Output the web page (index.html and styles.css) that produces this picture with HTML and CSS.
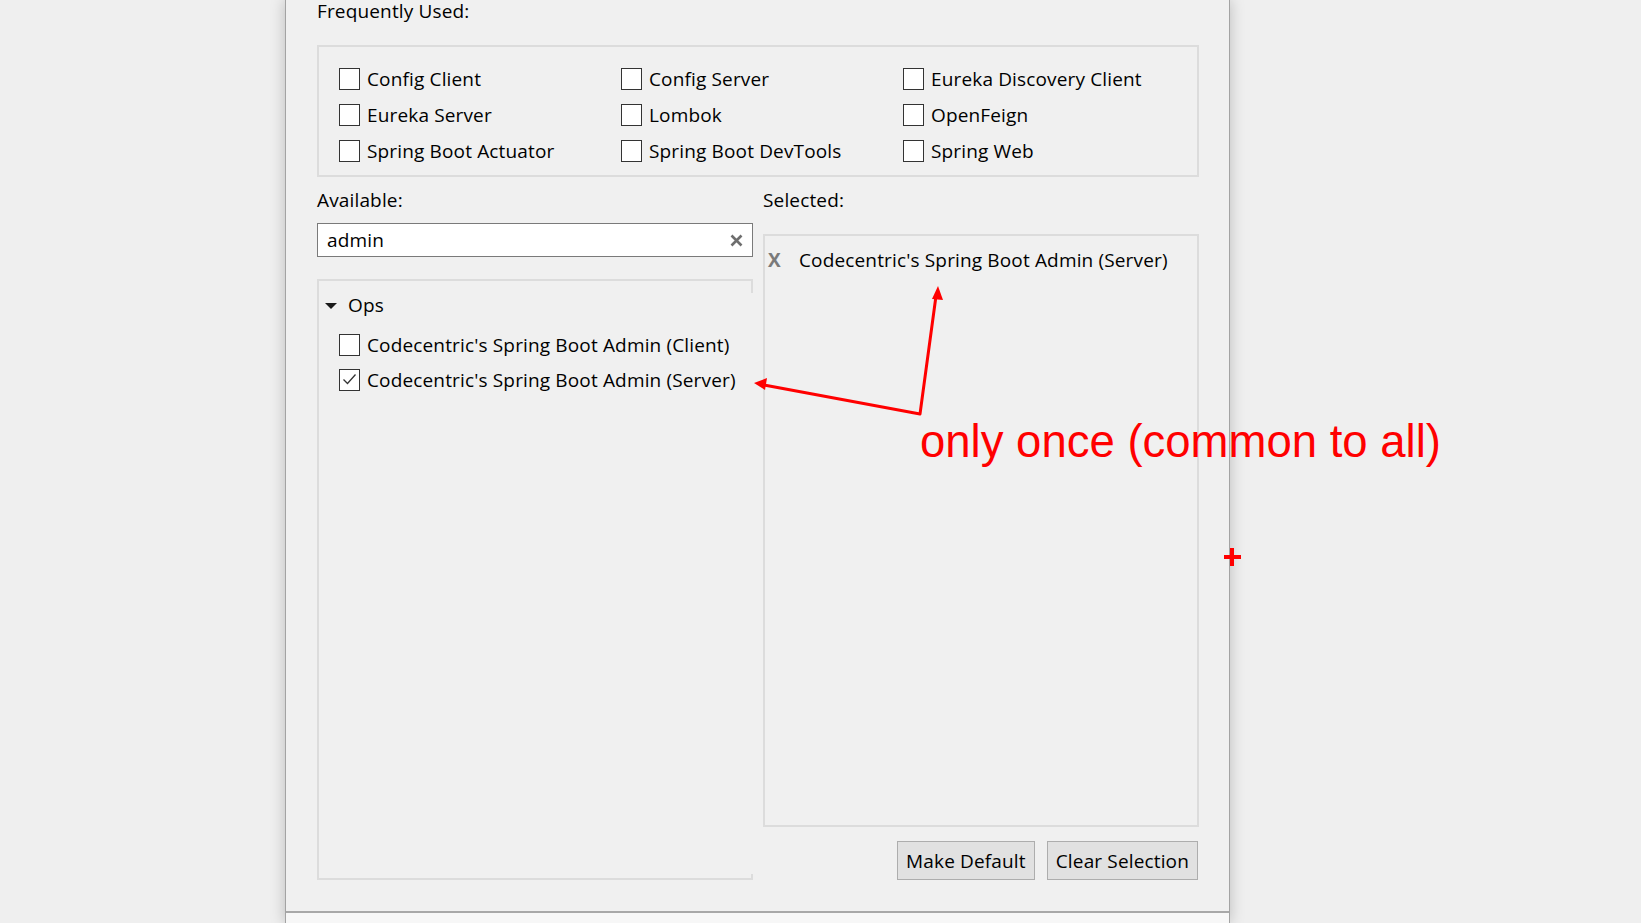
FILE: index.html
```html
<!DOCTYPE html>
<html lang="en">
<head>
<meta charset="utf-8">
<title>New Spring Starter Project Dependencies</title>
<link rel="stylesheet" href="styles.css">
</head>
<body>
<div class="stage">
  <div class="dialog">
    <div class="content">
      <div class="label">Frequently Used:</div>
      <div class="freq">
        <label class="cb-item"><span class="cb"></span><span>Config Client</span></label>
        <label class="cb-item"><span class="cb"></span><span>Config Server</span></label>
        <label class="cb-item"><span class="cb"></span><span>Eureka Discovery Client</span></label>
        <label class="cb-item"><span class="cb"></span><span>Eureka Server</span></label>
        <label class="cb-item"><span class="cb"></span><span>Lombok</span></label>
        <label class="cb-item"><span class="cb"></span><span>OpenFeign</span></label>
        <label class="cb-item"><span class="cb"></span><span>Spring Boot Actuator</span></label>
        <label class="cb-item"><span class="cb"></span><span>Spring Boot DevTools</span></label>
        <label class="cb-item"><span class="cb"></span><span>Spring Web</span></label>
      </div>
      <div class="lists">
        <div class="col">
          <div class="label">Available:</div>
          <div class="search">
            <span class="search-text">admin</span>
            <svg class="search-clear" width="13" height="13" viewBox="0 0 13 13"><path d="M1.5 1.5 L11.5 11.5 M11.5 1.5 L1.5 11.5" stroke="#6e6e6e" stroke-width="2.6" fill="none"/></svg>
          </div>
          <div class="tree">
            <div class="tree-cat"><span class="twisty"></span><span>Ops</span></div>
            <div class="tree-children">
              <label class="cb-item tree-item"><span class="cb"></span><span>Codecentric's Spring Boot Admin (Client)</span></label>
              <label class="cb-item tree-item"><span class="cb"><svg width="19" height="19" viewBox="0 0 19 19"><path d="M3.5 9.5 L7.5 13.5 L15.5 4.5" stroke="#333" stroke-width="1.3" fill="none"/></svg></span><span>Codecentric's Spring Boot Admin (Server)</span></label>
            </div>
          </div>
        </div>
        <div class="col">
          <div class="label">Selected:</div>
          <div class="selected">
            <div class="sel-row"><span class="sel-x">X</span><span>Codecentric's Spring Boot Admin (Server)</span></div>
          </div>
          <div class="actions">
            <button class="btn" type="button">Make Default</button>
            <button class="btn" type="button">Clear Selection</button>
          </div>
        </div>
      </div>
    </div>
    <div class="footer"></div>
  </div>

  <svg class="annot" width="1641" height="923" viewBox="0 0 1641 923">
    <g stroke="#ff0000" stroke-width="3" fill="none" stroke-linejoin="round">
      <path d="M764 385 L920 414 L936 296"/>
    </g>
    <g fill="#ff0000">
      <polygon points="754,383 767,378 765,390"/>
      <polygon points="938,286 932,299 943,300"/>
      <rect x="1224" y="555" width="17" height="4"/>
      <rect x="1230" y="548" width="4" height="18"/>
    </g>
  </svg>
  <div class="note">only once (common to all)</div>
</div>
</body>
</html>
```
FILE: styles.css
```css
* { box-sizing: border-box; }

html, body {
  margin: 0;
  padding: 0;
}

body {
  background: #efefef;
  font-family: "Segoe UI", "Open Sans", "Noto Sans", sans-serif;
  font-size: 19px;
  letter-spacing: 0.15px;
  color: #000;
}

.stage {
  position: relative;
  width: 1641px;
  height: 923px;
  overflow: hidden;
}

.dialog {
  margin-left: 285px;
  width: 945px;
  height: 923px;
  background: #f0f0f0;
  border-left: 1px solid #a3a3a3;
  border-right: 1px solid #a3a3a3;
  box-shadow: 0 0 14px rgba(0, 0, 0, 0.22);
  display: flex;
  flex-direction: column;
}

.content {
  height: 911px;
  padding: 0 30px 31px 31px;
  display: flex;
  flex-direction: column;
}

.label {
  height: 24px;
  line-height: 22px;
  white-space: nowrap;
}

.freq {
  margin-top: 21px;
  height: 132px;
  border: 2px solid #dcdcdc;
  padding: 21px 0 0 20px;
  display: grid;
  grid-template-columns: 282px 282px 1fr;
  grid-auto-rows: 22px;
  row-gap: 14px;
}

.cb-item {
  display: flex;
  align-items: center;
  gap: 7px;
  white-space: nowrap;
  line-height: 22px;
}

.cb {
  flex: none;
  width: 21px;
  height: 22px;
  border: 1px solid #333;
  background: #fff;
  display: flex;
  align-items: center;
  justify-content: center;
}

.lists {
  flex: 1;
  margin-top: 12px;
  display: grid;
  grid-template-columns: 436px 436px;
  column-gap: 10px;
}

.col {
  display: flex;
  flex-direction: column;
}

.search {
  margin-top: 10px;
  height: 34px;
  border: 1px solid #7a7a7a;
  background: #fff;
  display: flex;
  align-items: center;
  padding: 0 9px 0 9px;
}

.search-text {
  flex: 1;
}

.search-clear {
  flex: none;
  margin-top: 1px;
}

.tree {
  flex: 1;
  margin-top: 22px;
  border: 2px solid #dcdcdc;
  border-right: none;
  background:
    linear-gradient(#dcdcdc, #dcdcdc) right top / 2px 12px no-repeat,
    linear-gradient(#dcdcdc, #dcdcdc) right bottom / 2px 4px no-repeat;
  padding: 7px 0 0 6px;
}

.tree-cat {
  height: 34px;
  display: flex;
  align-items: center;
  gap: 11px;
}

.twisty {
  width: 0;
  height: 0;
  border-left: 6px solid transparent;
  border-right: 6px solid transparent;
  border-top: 6px solid #1a1a1a;
  margin-top: 1px;
}

.tree-children {
  margin-top: 5px;
  padding-left: 14px;
}

.tree-item {
  height: 35px;
}

.selected {
  flex: 1;
  margin-top: 21px;
  border: 2px solid #dcdcdc;
  padding: 7px 0 0 3px;
}

.sel-row {
  height: 34px;
  display: flex;
  align-items: center;
  white-space: nowrap;
}

.sel-x {
  width: 31px;
  color: #7a7a7a;
  font-weight: bold;
}

.actions {
  margin-top: 14px;
  display: flex;
  justify-content: flex-end;
  gap: 12px;
  padding-right: 1px;
}

.btn {
  height: 39px;
  padding: 0 8px;
  font: inherit;
  letter-spacing: inherit;
  color: #000;
  background: #e1e1e1;
  border: 1px solid #adadad;
  border-radius: 0;
}

.footer {
  flex: 1;
  border-top: 2px solid #a8a8a8;
  background: #f7f7f7;
}

.annot {
  position: absolute;
  left: 0;
  top: 0;
  pointer-events: none;
}

.note {
  position: absolute;
  left: 920px;
  top: 416px;
  font-family: "Liberation Sans", Arial, sans-serif;
  font-size: 45.5px;
  line-height: 52px;
  letter-spacing: 0;
  color: #ff0000;
  white-space: nowrap;
}
```
